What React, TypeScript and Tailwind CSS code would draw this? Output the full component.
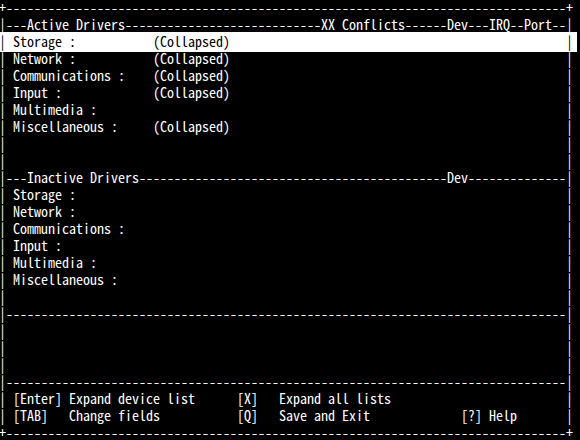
const COLS = 82

// put strings at given columns inside a bordered row
function place(parts: [number, string][], edge = "|") {
  const chars = Array(COLS).fill(" ")
  chars[0] = edge
  chars[COLS - 1] = edge
  for (const [col, text] of parts) {
    for (let i = 0; i < text.length; i++) chars[col + i] = text[i]
  }
  return chars.join("")
}

function rule(edge: string, parts: [number, string][] = []) {
  const chars = Array(COLS).fill("-")
  chars[0] = edge
  chars[COLS - 1] = edge
  for (const [col, text] of parts) {
    for (let i = 0; i < text.length; i++) chars[col + i] = text[i]
  }
  return chars.join("")
}

const categories = ["Storage", "Network", "Communications", "Input", "Multimedia", "Miscellaneous"]
const activeState: Record<string, string> = {
  Storage: "(Collapsed)",
  Network: "(Collapsed)",
  Communications: "(Collapsed)",
  Input: "(Collapsed)",
  Multimedia: "",
  Miscellaneous: "(Collapsed)",
}

export default function App() {
  const lines: { text: string; selected?: boolean }[] = [
    { text: rule("+") },
    { text: rule("|", [[4, "Active Drivers"], [46, "XX Conflicts"], [64, "Dev"], [70, "IRQ"], [75, "Port"]]) },
    ...categories.map((c, i) => ({
      text: place([[2, c + " :"], [22, activeState[c]]]),
      selected: i === 0,
    })),
    { text: place([]) },
    { text: place([]) },
    { text: rule("|", [[4, "Inactive Drivers"], [64, "Dev"]]) },
    ...categories.map((c) => ({ text: place([[2, c + " :"]]) })),
    { text: place([]) },
    { text: rule("|") },
    { text: place([]) },
    { text: place([]) },
    { text: place([]) },
    { text: rule("|") },
    { text: place([[2, "[Enter]"], [10, "Expand device list"], [34, "[X]"], [40, "Expand all lists"]]) },
    { text: place([[2, "[TAB]"], [10, "Change fields"], [34, "[Q]"], [40, "Save and Exit"], [66, "[?] Help"]]) },
    { text: rule("+") },
  ]

  return (
    <div className="w-[580px] h-[440px] overflow-hidden bg-black text-white">
      <div className="ml-[-1px] mt-[-1px] text-[14px] font-['Noto_Sans_Mono_CJK_JP','DejaVu_Sans_Mono',monospace]">
        {lines.map((line, i) => (
          <div
            key={i}
            className={
              line.selected
                ? "h-[17px] leading-[17px] whitespace-pre w-[578px] bg-white text-black shadow-[0_-1px_0_#fff,0_2px_0_#fff]"
                : "h-[17px] leading-[17px] whitespace-pre"
            }
          >
            {line.text}
          </div>
        ))}
      </div>
    </div>
  )
}
